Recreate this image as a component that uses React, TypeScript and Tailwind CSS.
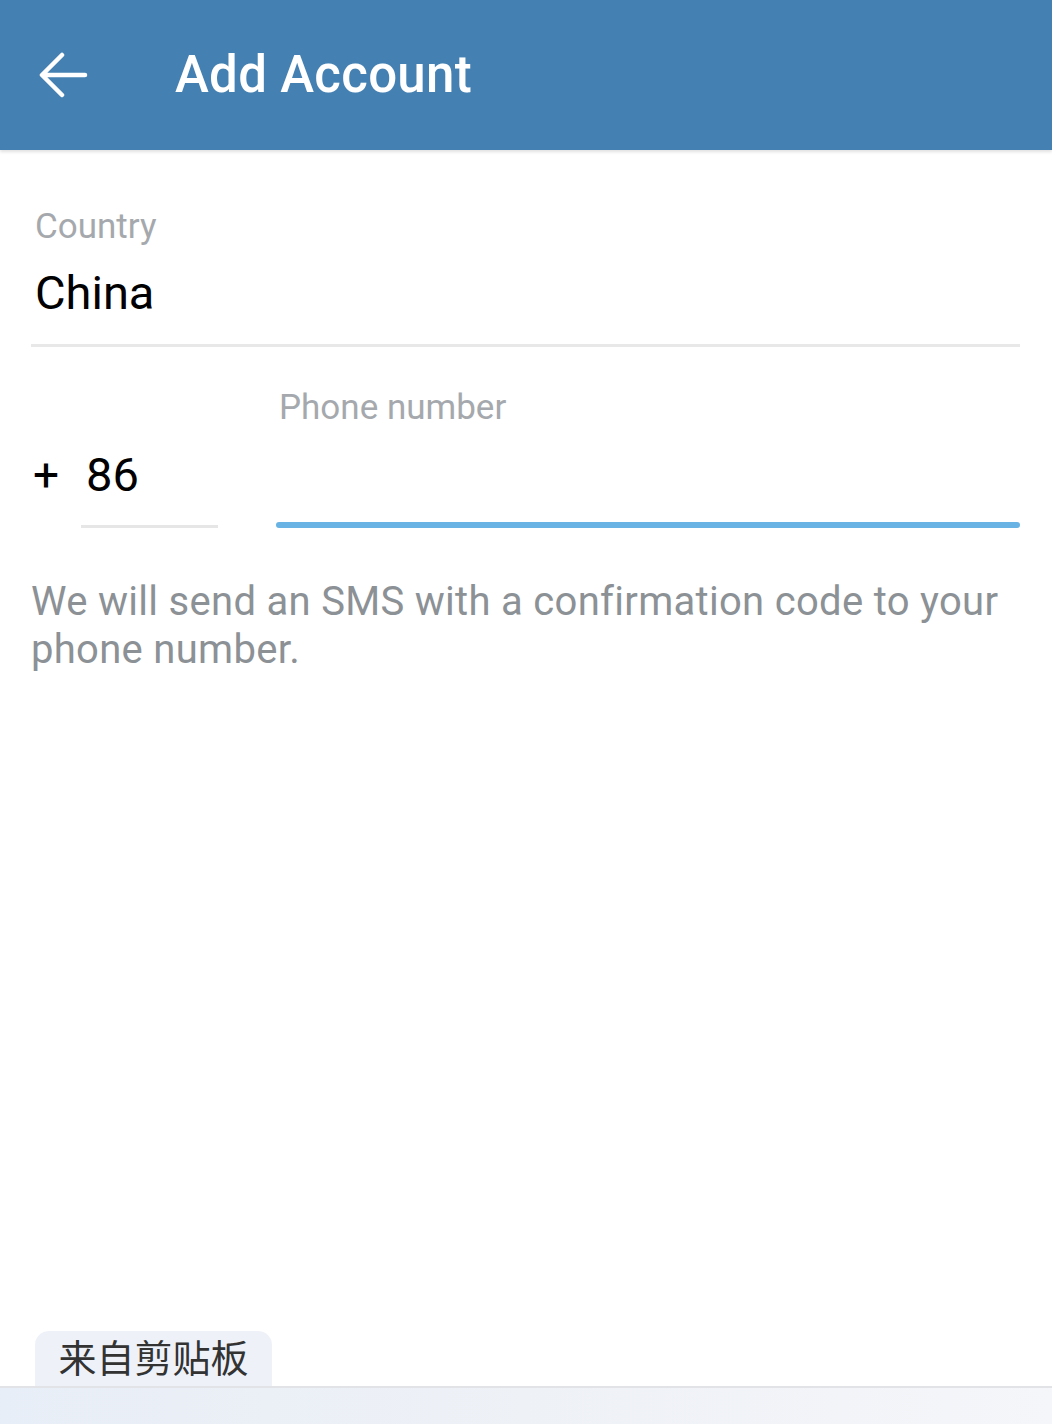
import React from "react";

const App: React.FC = () => {
  return (
    <div
      className="w-[1052px] h-[1424px] bg-white flex flex-col overflow-hidden"
      style={{ fontFamily: "Roboto, 'Noto Sans CJK SC', sans-serif" }}
    >
      {/* header */}
      <div className="h-[150px] bg-[#4481b2] flex items-center shrink-0 shadow-[0_2px_3px_rgba(0,0,0,0.12)]">
        <div className="w-[175px] pl-[38px] flex items-center">
          <svg width="50" height="46" viewBox="0 0 50 46" fill="none">
            <path
              d="M47 23H5M24 3L4 23l20 20"
              stroke="white"
              strokeWidth="4.5"
              strokeLinecap="round"
              strokeLinejoin="round"
            />
          </svg>
        </div>
        <h1 className="text-white text-[51px] font-medium tracking-[0.3px] leading-none pb-[2px]">
          Add Account
        </h1>
      </div>

      {/* country */}
      <div className="pl-[31px] pr-[32px] pt-[55px]">
        <div className="text-[35px] leading-[44px] text-[#a5a9ad] pl-[4px]">Country</div>
        <div className="text-[47px] leading-[56px] text-black pl-[4px] mt-[16px]">China</div>
        <div className="h-[3px] bg-[#e8e8e8] mt-[23px]" />
      </div>

      {/* phone */}
      <div className="flex pl-[33px] pr-[32px] pt-[39px]">
        <div className="w-[243px] flex flex-col justify-end">
          <div className="flex items-center text-black">
            <span className="text-[46px] leading-[56px] w-[53px]">+</span>
            <span className="text-[47px] leading-[56px]">86</span>
          </div>
          <div className="h-[3px] bg-[#e6e6e6] w-[137px] ml-[48px] mt-[22px]" />
        </div>
        <div className="flex-1 flex flex-col">
          <div className="text-[35px] leading-[44px] text-[#a5a9ad] pl-[3px]">Phone number</div>
          <div className="h-[6px] bg-[#68b3e3] rounded-full mt-[92px]" />
        </div>
      </div>

      {/* hint */}
      <p className="pl-[31px] pr-[30px] mt-[50px] text-[40px] leading-[48px] text-[#8c9196] tracking-[0.3px]">
        We will send an SMS with a confirmation code to your phone number.
      </p>

      <div className="flex-1" />

      {/* clipboard suggestion */}
      <div className="pl-[35px]">
        <div className="w-[237px] h-[55px] bg-[#eef2f8] rounded-t-[14px] flex items-center justify-center text-[38px] text-[#333] leading-none">
          来自剪贴板
        </div>
      </div>
      <div className="h-[38px] border-t-2 border-[#e2e3e6] bg-gradient-to-r from-[#e8eef7] via-[#eef1f6] to-[#f5f6fa] shrink-0" />
    </div>
  );
};

export default App;
